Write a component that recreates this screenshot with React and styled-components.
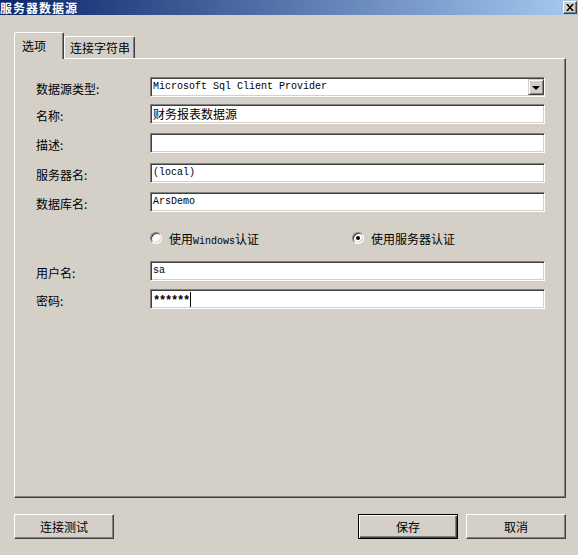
import React from 'react';
import styled, { createGlobalStyle } from 'styled-components';

const GlobalStyle = createGlobalStyle`
  html, body { margin: 0; padding: 0; background: #d4d0c8; }
  body {
    font-family: "Noto Sans CJK SC", "Liberation Sans", sans-serif;
    font-size: 12px;
    color: #000;
  }
`;

const Window = styled.div`
  width: 578px;
  height: 555px;
  display: flex;
  flex-direction: column;
  background: #d4d0c8;
  overflow: hidden;
`;

const TitleBar = styled.div`
  flex: none;
  height: 15px;
  display: flex;
  align-items: center;
  justify-content: space-between;
  background: linear-gradient(to right, #0a246a, #a6caf0);
`;

const Title = styled.span`
  color: #fff;
  font-weight: bold;
  font-size: 12px;
  letter-spacing: 1px;
  line-height: 15px;
  height: 15px;
`;

const CloseButton = styled.div`
  box-sizing: border-box;
  width: 14px;
  height: 13px;
  margin-right: 1px;
  display: flex;
  align-items: center;
  justify-content: center;
  background: #d4d0c8;
  border-top: 1px solid #fff;
  border-left: 1px solid #fff;
  border-right: 1px solid #404040;
  border-bottom: 1px solid #404040;
  box-shadow: inset -1px -1px #808080;
`;

const Body = styled.div`
  flex: 1;
  display: flex;
  flex-direction: column;
  padding: 17px 0 0 14px;
`;

const TabStrip = styled.div`
  display: flex;
  align-items: flex-end;
  height: 26px;
`;

const Tab = styled.div`
  position: relative;
  z-index: ${p => (p.$active ? 1 : 0)};
  box-sizing: border-box;
  width: ${p => p.$width}px;
  height: ${p => (p.$active ? 27 : 22)}px;
  margin-bottom: ${p => (p.$active ? -1 : 0)}px;
  padding-left: ${p => p.$pad}px;
  display: flex;
  align-items: center;
  background: #d4d0c8;
  border-top: 1px solid #fff;
  border-left: 1px solid #fff;
  border-right: 1px solid #404040;
  box-shadow: inset -1px 0 #808080;
  border-radius: 2px 2px 0 0;
  line-height: 14px;
  white-space: nowrap;
`;

const Panel = styled.div`
  box-sizing: border-box;
  width: 552px;
  height: 440px;
  display: flex;
  flex-direction: column;
  padding-left: 21px;
  border-top: 1px solid #fff;
  border-left: 1px solid #fff;
  border-right: 1px solid #404040;
  border-bottom: 1px solid #404040;
  box-shadow: inset -1px -1px #808080;
`;

const Row = styled.div`
  display: grid;
  grid-template-columns: 114px 395px;
  align-items: center;
  height: ${p => p.$h || 20}px;
  margin-top: ${p => p.$mt}px;
`;

const Label = styled.span`
  line-height: 14px;
  padding-top: 3px;
`;

const Field = styled.div`
  box-sizing: border-box;
  height: 20px;
  display: flex;
  align-items: center;
  padding: 0 ${p => (p.$combo ? 0 : 2)}px 0 1px;
  background: #fff;
  border-top: 1px solid #808080;
  border-left: 1px solid #808080;
  border-bottom: 1px solid #fff;
  border-right: 1px solid #fff;
  box-shadow: inset 1px 1px #404040, inset -1px -1px #d4d0c8;
  font-family: ${p => (p.$cjk ? '"Noto Sans CJK SC", sans-serif' : '"Liberation Mono", "Noto Sans CJK SC", monospace')};
  font-size: ${p => (p.$cjk ? 12 : 10)}px;
  line-height: 14px;
  white-space: nowrap;
  overflow: hidden;
`;

const FieldText = styled.span`
  flex: 1;
  display: flex;
  align-items: center;
  padding-left: 1px;
`;

const Mask = styled.span`
  font-size: 12px;
  font-weight: bold;
  letter-spacing: -1.2px;
  line-height: 14px;
  padding-top: 4px;
`;

const Caret = styled.span`
  display: inline-block;
  width: 1px;
  height: 15px;
  margin-left: 1px;
  background: #000;
`;

const DropButton = styled.div`
  box-sizing: border-box;
  width: 16px;
  height: 16px;
  display: flex;
  align-items: center;
  justify-content: center;
  background: #d4d0c8;
  border-top: 1px solid #d4d0c8;
  border-left: 1px solid #d4d0c8;
  border-right: 1px solid #404040;
  border-bottom: 1px solid #404040;
  box-shadow: inset 1px 1px #fff, inset -1px -1px #808080;
`;

const Arrow = styled.span`
  width: 0;
  height: 0;
  margin-top: 1px;
  border-left: 4px solid transparent;
  border-right: 4px solid transparent;
  border-top: 4px solid #000;
`;

const RadioGroup = styled.div`
  display: grid;
  grid-template-columns: 202px 1fr;
  align-items: center;
  height: 12px;
`;

const RadioOption = styled.label`
  display: flex;
  align-items: center;
  gap: 7px;
  height: 12px;
  white-space: nowrap;
`;

const RadioText = styled.span`
  display: block;
  height: 14px;
  line-height: 14px;
  margin-top: 2px;
`;

const RadioCircle = styled.span`
  box-sizing: border-box;
  flex: none;
  width: 12px;
  height: 12px;
  border-radius: 50%;
  display: flex;
  align-items: center;
  justify-content: center;
  background: #fff;
  border-top: 1px solid #808080;
  border-left: 1px solid #808080;
  border-bottom: 1px solid #fff;
  border-right: 1px solid #fff;
  box-shadow: inset 1px 1px #404040, inset -1px -1px #d4d0c8;
  &::after {
    content: "";
    width: 4px;
    height: 4px;
    border-radius: 50%;
    background: ${p => (p.$checked ? '#000' : 'transparent')};
  }
`;

const Latin = styled.span`
  font-family: "Liberation Mono", monospace;
  font-size: 10px;
`;

const Footer = styled.div`
  display: flex;
  align-items: center;
  width: 552px;
  margin-top: 16px;
  gap: 8px;
`;

const Button = styled.button`
  box-sizing: border-box;
  width: 100px;
  height: 25px;
  padding: 0;
  margin: 0 0 0 ${p => (p.$push ? 'auto' : '0')};
  background: #d4d0c8;
  color: #000;
  font-family: "Noto Sans CJK SC", sans-serif;
  font-size: 12px;
  line-height: 14px;
  border-top: 1px solid ${p => (p.$default ? '#000' : '#fff')};
  border-left: 1px solid ${p => (p.$default ? '#000' : '#fff')};
  border-right: 1px solid ${p => (p.$default ? '#000' : '#404040')};
  border-bottom: 1px solid ${p => (p.$default ? '#000' : '#404040')};
  box-shadow: ${p =>
    p.$default
      ? 'inset 1px 1px #fff, inset -1px -1px #404040, inset -2px -2px #808080'
      : 'inset -1px -1px #808080'};
`;

const fields = [
  { label: '名称:', value: '财务报表数据源', cjk: true, mt: 7 },
  { label: '描述:', value: '', cjk: false, mt: 9 },
  { label: '服务器名:', value: '(local)', cjk: false, mt: 10 },
  { label: '数据库名:', value: 'ArsDemo', cjk: false, mt: 9 },
];

export default function App() {
  return (
    <Window>
      <GlobalStyle />
      <TitleBar>
        <Title>服务器数据源</Title>
        <CloseButton>
          <svg width="8" height="7" viewBox="0 0 8 7">
            <path d="M0 0h2l2 2.5L6 0h2L5 3.5 8 7H6L4 4.5 2 7H0l3-3.5z" fill="#000" />
          </svg>
        </CloseButton>
      </TitleBar>
      <Body>
        <TabStrip>
          <Tab $active $width={50} $pad={7}>选项</Tab>
          <Tab $width={71} $pad={5}>连接字符串</Tab>
        </TabStrip>
        <Panel>
          <Row $mt={18}>
            <Label>数据源类型:</Label>
            <Field $combo>
              <FieldText>Microsoft Sql Client Provider</FieldText>
              <DropButton><Arrow /></DropButton>
            </Field>
          </Row>
          {fields.map(f => (
            <Row key={f.label} $mt={f.mt}>
              <Label>{f.label}</Label>
              <Field $cjk={f.cjk}>
                <FieldText>{f.value}</FieldText>
              </Field>
            </Row>
          ))}
          <Row $mt={20} $h={12}>
            <span />
            <RadioGroup>
              <RadioOption>
                <RadioCircle />
                <RadioText>使用<Latin>Windows</Latin>认证</RadioText>
              </RadioOption>
              <RadioOption>
                <RadioCircle $checked />
                <RadioText>使用服务器认证</RadioText>
              </RadioOption>
            </RadioGroup>
          </Row>
          <Row $mt={17}>
            <Label>用户名:</Label>
            <Field>
              <FieldText>sa</FieldText>
            </Field>
          </Row>
          <Row $mt={8}>
            <Label>密码:</Label>
            <Field>
              <FieldText><Mask>******</Mask><Caret /></FieldText>
            </Field>
          </Row>
        </Panel>
        <Footer>
          <Button>连接测试</Button>
          <Button $push $default>保存</Button>
          <Button>取消</Button>
        </Footer>
      </Body>
    </Window>
  );
}
